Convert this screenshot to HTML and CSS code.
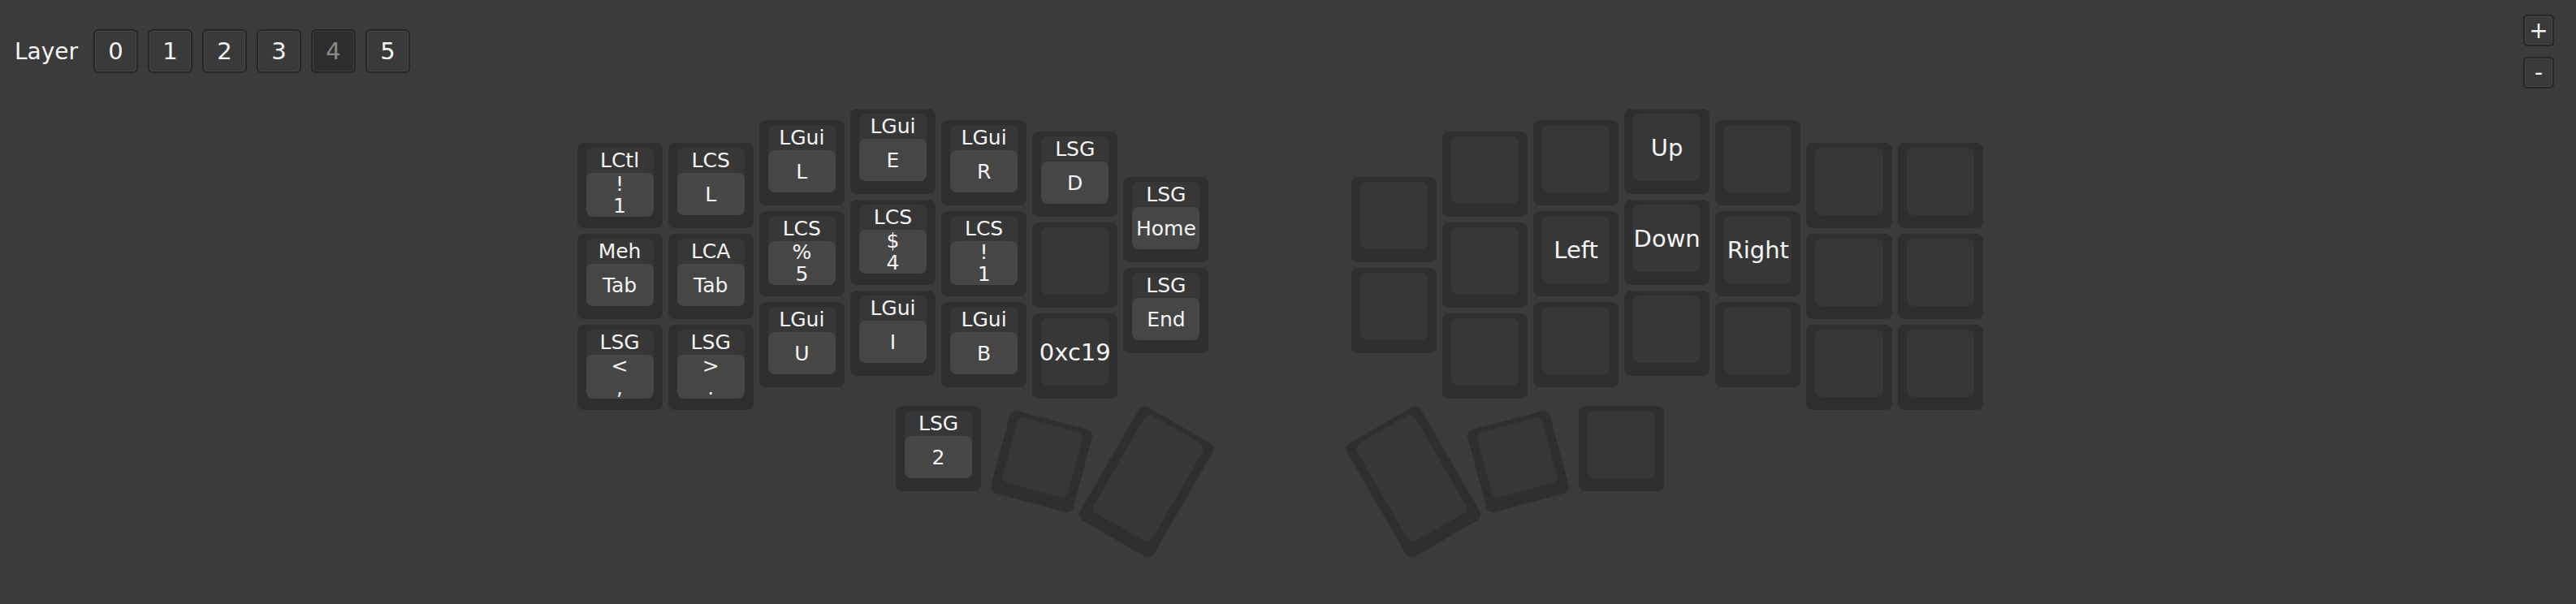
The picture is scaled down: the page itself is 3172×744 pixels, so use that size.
FILE: index.html
```html
<!DOCTYPE html>
<html lang="en">
<head>
  <meta charset="UTF-8" />
  <meta name="viewport" content="width=device-width, initial-scale=1.0"/>
  <title>Keymap Editor</title>
  <link rel="stylesheet" href="styles.css">
</head>
<body>
  <div class="toolbar">
    <span class="layer-label">Layer</span>
    <button class="layer-btn">0</button>
    <button class="layer-btn">1</button>
    <button class="layer-btn">2</button>
    <button class="layer-btn">3</button>
    <button class="layer-btn active">4</button>
    <button class="layer-btn">5</button>
  </div>

  <div class="zoom-controls">
    <button class="zoom-btn">+</button>
    <button class="zoom-btn">-</button>
  </div>

  <div class="canvas">
    <div class="board" id="board"></div>
  </div>

  <script>
    const U = 112.14;
    const GAP = 3.5;
    const BOARD_W = 15.5;

    // left half, layer 4
    const leftKeys = [
      { x: 0, y: 0.375, hold: "LCtl", tap: ["!", "1"] },
      { x: 0, y: 1.375, hold: "Meh", tap: ["Tab"] },
      { x: 0, y: 2.375, hold: "LSG", tap: ["<", ","] },
      { x: 1, y: 0.375, hold: "LCS", tap: ["L"] },
      { x: 1, y: 1.375, hold: "LCA", tap: ["Tab"] },
      { x: 1, y: 2.375, hold: "LSG", tap: [">", "."] },
      { x: 2, y: 0.125, hold: "LGui", tap: ["L"] },
      { x: 2, y: 1.125, hold: "LCS", tap: ["%", "5"] },
      { x: 2, y: 2.125, hold: "LGui", tap: ["U"] },
      { x: 3, y: 0, hold: "LGui", tap: ["E"] },
      { x: 3, y: 1, hold: "LCS", tap: ["$", "4"] },
      { x: 3, y: 2, hold: "LGui", tap: ["I"] },
      { x: 4, y: 0.125, hold: "LGui", tap: ["R"] },
      { x: 4, y: 1.125, hold: "LCS", tap: ["!", "1"] },
      { x: 4, y: 2.125, hold: "LGui", tap: ["B"] },
      { x: 5, y: 0.25, hold: "LSG", tap: ["D"] },
      { x: 5, y: 1.25 },
      { x: 5, y: 2.25, label: "0xc19" },
      { x: 6, y: 0.75, hold: "LSG", tap: ["Home"] },
      { x: 6, y: 1.75, hold: "LSG", tap: ["End"] },
      { x: 3.5, y: 3.265, hold: "LSG", tap: ["2"] },
      { x: 4.633, y: 3.402, r: 15 },
      { x: 5.783, y: 3.383, h: 1.5, r: 30 }
    ];

    // right half, mirrored positions
    const rightLabels = {
      "10.5,1.125": "Left",
      "11.5,0": "Up",
      "11.5,1": "Down",
      "12.5,1.125": "Right"
    };
    const rightKeys = leftKeys.map(k => {
      const w = k.w || 1;
      const x = +(BOARD_W - k.x - w).toFixed(3);
      const key = { x: x, y: k.y, h: k.h, r: k.r ? -k.r : 0 };
      const label = rightLabels[x + "," + k.y];
      if (label) key.label = label;
      return key;
    });

    const board = document.getElementById("board");

    function renderKey(k) {
      const w = k.w || 1;
      const h = k.h || 1;
      const el = document.createElement("div");
      el.className = "key";
      el.style.left = (k.x * U + GAP) + "px";
      el.style.top = (k.y * U + GAP) + "px";
      el.style.width = (w * U - GAP * 2) + "px";
      el.style.height = (h * U - GAP * 2) + "px";
      if (k.r) el.style.transform = `rotate(${k.r}deg)`;

      const cap = document.createElement("div");
      cap.className = "cap";

      if (k.hold) {
        const hold = document.createElement("div");
        hold.className = "hold";
        hold.textContent = k.hold;
        const tap = document.createElement("div");
        tap.className = "tap";
        k.tap.forEach(t => {
          const line = document.createElement("span");
          line.textContent = t;
          tap.appendChild(line);
        });
        cap.appendChild(hold);
        cap.appendChild(tap);
      } else if (k.label) {
        cap.classList.add("plain");
        cap.textContent = k.label;
      }

      el.appendChild(cap);
      board.appendChild(el);
    }

    leftKeys.forEach(renderKey);
    rightKeys.forEach(renderKey);
  </script>
</body>
</html>
```

FILE: styles.css
```css
body {
    font-family: 'DejaVu Sans', Verdana, sans-serif;
    background-color: #3b3b3b;
    color: #f4f4f4;
    margin: 0;
    padding: 0;
    height: 744px;
    overflow: hidden;
}
.toolbar {
    display: flex;
    align-items: center;
    gap: 12px;
    padding: 36px 0 0 18px;
    height: 54px;
}
.layer-label {
    font-size: 28px;
    margin-right: 7px;
}
.layer-btn {
    width: 55px;
    height: 54px;
    padding: 0;
    font-family: inherit;
    font-size: 29px;
    color: #f4f4f4;
    background-color: #3a3a3a;
    border: 2px solid #262626;
    border-radius: 6px;
    box-shadow: inset 0 0 0 1px #474747;
    cursor: pointer;
}
.layer-btn.active {
    background-color: #2e2e2e;
    color: #8a8a8a;
    box-shadow: inset 0 0 0 1px #3e3e3e;
}
.zoom-controls {
    position: absolute;
    top: 18px;
    right: 27px;
    display: flex;
    flex-direction: column;
    gap: 13px;
}
.zoom-btn {
    width: 38px;
    height: 39px;
    padding: 0;
    font-family: inherit;
    font-size: 28px;
    line-height: 1;
    color: #f4f4f4;
    background-color: #3a3a3a;
    border: 2px solid #262626;
    border-radius: 5px;
    box-shadow: inset 0 0 0 1px #474747;
    cursor: pointer;
}
.canvas {
    display: flex;
    justify-content: center;
    padding-right: 20px;
    margin-top: 40.5px;
}
.board {
    position: relative;
    width: 1738px;
    height: 580px;
}
.key {
    position: absolute;
    background-color: #2f2f2f;
    border-radius: 8px;
}
.cap {
    position: absolute;
    top: 6px;
    left: 11px;
    right: 11px;
    bottom: 16px;
    background-color: #373737;
    border-radius: 8px;
    display: flex;
    flex-direction: column;
}
.cap.plain {
    align-items: center;
    justify-content: center;
    font-size: 29px;
}
.hold {
    height: 31px;
    line-height: 31px;
    font-size: 25px;
    text-align: center;
    white-space: nowrap;
}
.tap {
    flex: 1;
    background-color: #464646;
    border-radius: 8px;
    display: flex;
    flex-direction: column;
    align-items: center;
    justify-content: center;
    font-size: 25px;
    line-height: 27px;
    white-space: nowrap;
}
```
